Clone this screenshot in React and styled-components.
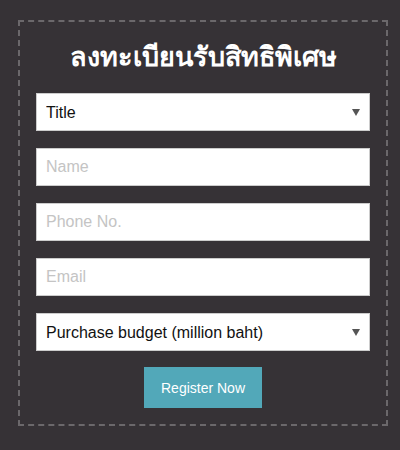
import React from 'react';
import styled, { createGlobalStyle } from 'styled-components';

const GlobalStyle = createGlobalStyle`
	html, body {
		margin: 0;
		padding: 0;
		background: #363236;
	}
	body {
		font-family: "Liberation Sans", Arial, sans-serif;
	}
`;

const Page = styled.div`
	width: 400px;
	height: 450px;
	box-sizing: border-box;
	padding: 20px 12px 0 18px;
	background: #363236;
`;

const Box = styled.form`
	width: 370px;
	height: 406px;
	box-sizing: border-box;
	border: 2px dashed #6b686b;
	padding: 16px 16px 15px;
	display: flex;
	flex-direction: column;
	align-items: stretch;
`;

const Heading = styled.h2`
	margin: 2px 0 19px;
	height: 34px;
	line-height: 34px;
	text-align: center;
	color: #fff;
	font-size: 27px;
	font-weight: 700;
	font-family: Tahoma, "DejaVu Sans", "Noto Sans", sans-serif;
`;

const Fields = styled.div`
	display: flex;
	flex-direction: column;
	gap: 17px;
`;

const Input = styled.input`
	box-sizing: border-box;
	width: 334px;
	height: 38px;
	margin: 0;
	padding: 0 9px;
	border: 1px solid #ccc;
	background: #fff;
	font-family: "Liberation Sans", Arial, sans-serif;
	font-size: 16px;
	color: #222;
	outline: none;

	&::placeholder {
		color: #c4c4c4;
	}
`;

const SelectWrap = styled.div`
	position: relative;
	width: 334px;
	height: 38px;

	&::after {
		content: '';
		position: absolute;
		right: 10px;
		top: 16px;
		border-left: 4px solid transparent;
		border-right: 4px solid transparent;
		border-top: 7px solid #555;
		pointer-events: none;
	}
`;

const Select = styled.select`
	appearance: none;
	-webkit-appearance: none;
	box-sizing: border-box;
	width: 100%;
	height: 100%;
	margin: 0;
	padding: 0 9px;
	border: 1px solid #ccc;
	border-radius: 0;
	background: #fff;
	font-family: "Liberation Sans", Arial, sans-serif;
	font-size: 16px;
	color: #111;
	outline: none;
`;

const Button = styled.button`
	align-self: center;
	margin-top: 16px;
	width: 118px;
	height: 41px;
	border: none;
	background: #52a8b9;
	color: #fff;
	font-family: "Liberation Sans", Arial, sans-serif;
	font-size: 14px;
	cursor: pointer;
`;

const Dropdown = ({ label, options }) => (
	<SelectWrap>
		<Select defaultValue=''>
			<option value=''>{label}</option>
			{options.map((o) => (
				<option key={o} value={o}>{o}</option>
			))}
		</Select>
	</SelectWrap>
);

export default function App() {
	return (
		<Page>
			<GlobalStyle />
			<Box onSubmit={(e) => e.preventDefault()}>
				<Heading>ลงทะเบียนรับสิทธิพิเศษ</Heading>
				<Fields>
					<Dropdown label='Title' options={[ 'Mr.', 'Mrs.', 'Ms.' ]} />
					<Input type='text' placeholder='Name' />
					<Input type='tel' placeholder='Phone No.' />
					<Input type='email' placeholder='Email' />
					<Dropdown label='Purchase budget (million baht)' options={[ '1 - 3', '3 - 5', '5+' ]} />
				</Fields>
				<Button type='submit'>Register Now</Button>
			</Box>
		</Page>
	);
}
